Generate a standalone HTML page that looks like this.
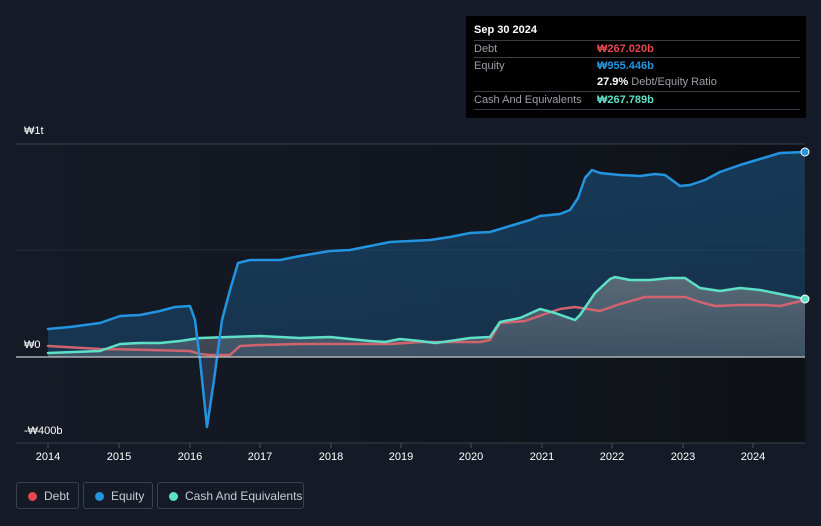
<!DOCTYPE html><html><head><style>
body{margin:0;width:821px;height:526px;background:#151b26;font-family:"Liberation Sans",sans-serif;overflow:hidden;position:relative}
.tt{position:absolute;left:466px;top:16px;width:340px;height:102px;background:#000;color:#fff;font-size:11px}
.row{position:absolute;left:8px;width:326px;border-top:1px solid #3a3d42;height:17px;line-height:17px}
.row span.l{color:#9aa0a6}.row span.v{position:absolute;left:123px}
.leg{position:absolute;top:482px;height:27px;border:1px solid #3b414b;border-radius:3px;color:#c8ccd2;font-size:12px;line-height:27px;box-sizing:border-box}
.leg i{position:absolute;left:11px;top:9px;width:9px;height:9px;border-radius:50%}
.leg span{position:absolute;left:27px}
.ax{position:absolute;color:#fff;font-size:11px}
</style></head><body>
<svg width="821" height="526" style="position:absolute;left:0;top:0">
<defs><linearGradient id="g" x1="0" y1="0" x2="0" y2="1"><stop offset="0" stop-color="#1a4a72" stop-opacity=".7"/><stop offset="1" stop-color="#1a4a72" stop-opacity=".5"/></linearGradient>
<linearGradient id="c" x1="0" y1="0" x2="0" y2="1"><stop offset="0" stop-color="#6a7680" stop-opacity=".8"/><stop offset="1" stop-color="#6a7680" stop-opacity=".45"/></linearGradient>
<linearGradient id="bg" x1="0" y1="0" x2="1" y2="0"><stop offset="0" stop-color="#151b26"/><stop offset="1" stop-color="#0e1117"/></linearGradient></defs>
<rect x="16" y="144" width="789" height="299" fill="url(#bg)"/>
<line x1="16" y1="144" x2="805" y2="144" stroke="#3a3f48"/>
<line x1="16" y1="250" x2="805" y2="250" stroke="#262c36"/>
<line x1="16" y1="443" x2="805" y2="443" stroke="#3a3f48"/>
<path d="M198,357 L200,360 207,427 214,380 217,357Z" fill="#3a1a22"/>
<g stroke-linejoin="round" stroke-linecap="round">
<path d="M48,329 L70,327 100,323 120,316 140,315 160,311 175,307 190,306 195,320 200,360 207,427 214,380 222,320 230,290 238,263 250,260 280,260 300,256 330,251 350,250 370,246 390,242 410,241 430,240 450,237 470,233 490,232 510,226 530,220 540,216 560,214 570,210 578,198 585,178 592,170 600,173 620,175 640,176 655,174 665,175 680,186 690,185 705,180 720,172 740,165 760,159 780,153 805,152 L805,357 L48,357Z" fill="url(#g)"/>
<path d="M48,353 L100,351 120,344 140,343 160,343 180,341 200,338 260,336 300,338 330,337 350,339 370,341 385,342 400,339 420,341 435,343 450,341 470,338 490,337 500,322 520,318 540,309 555,313 575,320 580,315 595,293 610,279 615,277 630,280 650,280 670,278 685,278 700,288 720,291 740,288 760,290 780,294 805,299 L805,357 L48,357Z" fill="url(#c)"/>
<path d="M48,346 L100,349 150,350 190,351 200,354 210,355 230,355 240,346 260,345 300,344 350,344 390,344 420,342 480,342 490,340 500,323 525,321 545,314 560,309 575,307 600,311 620,304 645,297 665,297 685,297 700,302 715,306 740,305 765,305 780,306 805,300" fill="none" stroke="#d0646e" stroke-width="2.5"/>
<path d="M48,353 L100,351 120,344 140,343 160,343 180,341 200,338 260,336 300,338 330,337 350,339 370,341 385,342 400,339 420,341 435,343 450,341 470,338 490,337 500,322 520,318 540,309 555,313 575,320 580,315 595,293 610,279 615,277 630,280 650,280 670,278 685,278 700,288 720,291 740,288 760,290 780,294 805,299" fill="none" stroke="#5ee0c8" stroke-width="2.5"/>
<path d="M48,329 L70,327 100,323 120,316 140,315 160,311 175,307 190,306 195,320 200,360 207,427 214,380 222,320 230,290 238,263 250,260 280,260 300,256 330,251 350,250 370,246 390,242 410,241 430,240 450,237 470,233 490,232 510,226 530,220 540,216 560,214 570,210 578,198 585,178 592,170 600,173 620,175 640,176 655,174 665,175 680,186 690,185 705,180 720,172 740,165 760,159 780,153 805,152" fill="none" stroke="#2394e0" stroke-width="2.5"/>
</g>
<line x1="16" y1="357" x2="805" y2="357" stroke="#c8c8c8" stroke-width="1.2"/>
<circle cx="805" cy="152" r="4" fill="#2394e0" stroke="#fff"/>
<circle cx="805" cy="299" r="4" fill="#5ee0c8" stroke="#fff"/>
<g stroke="#4a505a"><line x1="48" y1="443" x2="48" y2="448"/><line x1="119" y1="443" x2="119" y2="448"/><line x1="190" y1="443" x2="190" y2="448"/><line x1="260" y1="443" x2="260" y2="448"/><line x1="331" y1="443" x2="331" y2="448"/><line x1="401" y1="443" x2="401" y2="448"/><line x1="471" y1="443" x2="471" y2="448"/><line x1="542" y1="443" x2="542" y2="448"/><line x1="612" y1="443" x2="612" y2="448"/><line x1="683" y1="443" x2="683" y2="448"/><line x1="753" y1="443" x2="753" y2="448"/></g>
<g fill="#fff" font-size="11" text-anchor="middle" font-family="Liberation Sans"><text x="48" y="460">2014</text><text x="119" y="460">2015</text><text x="190" y="460">2016</text><text x="260" y="460">2017</text><text x="331" y="460">2018</text><text x="401" y="460">2019</text><text x="471" y="460">2020</text><text x="542" y="460">2021</text><text x="612" y="460">2022</text><text x="683" y="460">2023</text><text x="753" y="460">2024</text></g>
</svg>
<div class="ax" style="left:24px;top:125px">₩1t</div>
<div class="ax" style="left:24px;top:339px">₩0</div>
<div class="ax" style="left:24px;top:425px">-₩400b</div>
<div class="tt">
<div style="position:absolute;left:8px;top:8px;font-weight:bold;font-size:11px">Sep 30 2024</div>
<div class="row" style="top:24px"><span class="l">Debt</span><span class="v" style="color:#e5484d;font-weight:bold">₩267.020b</span></div>
<div class="row" style="top:41px"><span class="l">Equity</span><span class="v" style="color:#2394e0;font-weight:bold">₩955.446b</span></div>
<div class="row" style="top:58px;border-top:none"><span class="v"><b>27.9%</b> <span style="color:#9aa0a6">Debt/Equity Ratio</span></span></div>
<div class="row" style="top:75px;border-bottom:1px solid #3a3d42"><span class="l">Cash And Equivalents</span><span class="v" style="color:#5ee0c8;font-weight:bold">₩267.789b</span></div>
</div>
<div class="leg" style="left:16px;width:63px"><i style="background:#e5484d"></i><span>Debt</span></div>
<div class="leg" style="left:83px;width:70px"><i style="background:#2394e0"></i><span>Equity</span></div>
<div class="leg" style="left:157px;width:147px"><i style="background:#5ee0c8"></i><span>Cash And Equivalents</span></div>
</body></html>
